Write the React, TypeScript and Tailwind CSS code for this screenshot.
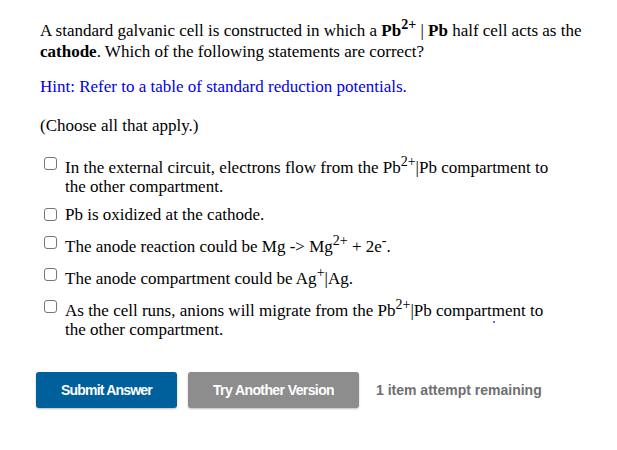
const OPTIONS: React.ReactNode[] = [
  <>
    In the external circuit, electrons flow from the Pb<Sup>2+</Sup>|Pb compartment to the other compartment.
  </>,
  <>Pb is oxidized at the cathode.</>,
  <>
    The anode reaction could be Mg -&gt; Mg<Sup>2+</Sup> + 2e<Sup>-</Sup>.
  </>,
  <>
    The anode compartment could be Ag<Sup>+</Sup>|Ag.
  </>,
  <>
    As the cell runs, anions will migrate from the Pb<Sup>2+</Sup>|Pb compartment to the other compartment.
  </>,
];

function Sup({ children }: { children: React.ReactNode }) {
  return <sup className="relative top-0 align-super text-[14px] leading-[normal]">{children}</sup>;
}

export default function App() {
  return (
    <main className="min-h-[450px] w-[617px] bg-white pl-[40px] pr-[30px] pt-[17px] font-['Liberation_Serif',serif] text-[17px] text-black">
      {/* Question */}
      <p className="leading-[21px]">
        A standard galvanic cell is constructed in which a <b>Pb<Sup>2+</Sup></b> | <b>Pb</b> half cell acts as the{' '}
        <b>cathode</b>. Which of the following statements are correct?
      </p>
      <p className="mt-[12px] text-[#0000ee]">Hint: Refer to a table of standard reduction potentials.</p>
      <p className="mt-[14px]">(Choose all that apply.)</p>

      {/* Options */}
      <div className="relative mr-[32px] mt-[15px] flex flex-col gap-[8px]">
        {OPTIONS.map((opt, i) => (
          <label key={i} className="flex items-start">
            <span className="ml-[4px] mt-[3px] h-[13px] w-[13px] shrink-0 rounded-[3px] border border-[#767676] bg-white" />
            <span className="ml-[8px] leading-[20px]">{opt}</span>
          </label>
        ))}
        <span className="absolute left-[453px] top-[167px] h-[2px] w-[2px] rounded-full bg-[#3b3bff]" />
      </div>

      {/* Actions */}
      <div className="mt-[32px] flex items-center font-['Liberation_Sans',Arial,sans-serif] text-[14px] font-bold">
        <button className="-ml-[4px] h-[36px] w-[141px] rounded-[3px] bg-[#00609c] tracking-[-0.8px] text-white shadow-[0_1px_2px_rgba(0,0,0,0.25)]">
          Submit Answer
        </button>
        <button className="ml-[11px] h-[36px] w-[171px] rounded-[3px] bg-[#8d8d8d] tracking-[-0.6px] text-white shadow-[0_1px_2px_rgba(0,0,0,0.25)]">
          Try Another Version
        </button>
        <span className="ml-[17px] text-[#6f6f6f]">1 item attempt remaining</span>
      </div>
    </main>
  );
}
